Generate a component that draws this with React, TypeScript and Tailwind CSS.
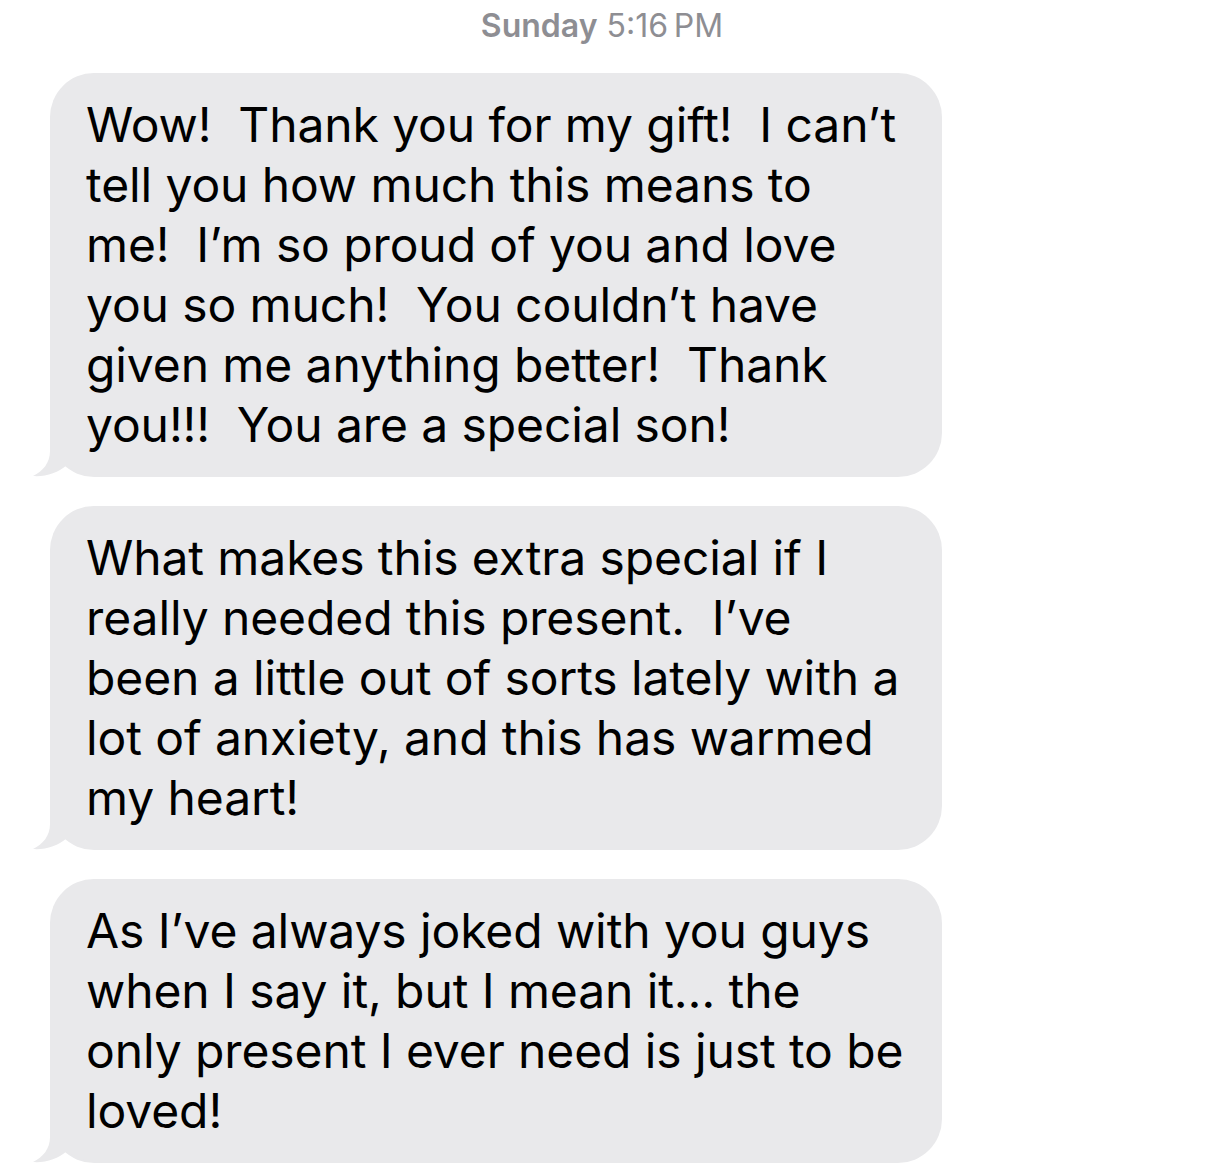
import React from "react";

const messages: string[][] = [
  [
    "Wow!  Thank you for my gift!  I can\u2019t",
    "tell you how much this means to",
    "me!  I\u2019m so proud of you and love",
    "you so much!  You couldn\u2019t have",
    "given me anything better!  Thank",
    "you!!!  You are a special son!",
  ],
  [
    "What makes this extra special if I",
    "really needed this present.  I\u2019ve",
    "been a little out of sorts lately with a",
    "lot of anxiety, and this has warmed",
    "my heart!",
  ],
  [
    "As I\u2019ve always joked with you guys",
    "when I say it, but I mean it\u2026 the",
    "only present I ever need is just to be",
    "loved!",
  ],
];

function Tail() {
  return (
    <svg
      className="absolute left-[-17px] bottom-0"
      width="80"
      height="46"
      viewBox="0 0 80 46"
    >
      <path
        d="M17 0 L17 20 C17 32 10 40 0 45 C12 46 25 42 34 34 C43 41 56 46 72 46 L80 46 L80 0 Z"
        fill="#e9e9eb"
      />
    </svg>
  );
}

export default function App() {
  return (
    <div
      className="w-[1206px] h-[1173px] bg-white overflow-hidden"
      style={{ fontFamily: "Inter, 'Noto Sans', sans-serif" }}
    >
      <div className="h-[73px] flex justify-center pl-[0px] pt-[6px]">
        <div className="text-[32px] leading-[40px] text-[#8e8e93] -translate-x-[1px]">
          <span className="font-semibold">Sunday</span>{" "}
          <span>5:16&#8201;PM</span>
        </div>
      </div>
      <div className="flex flex-col gap-[29px] pl-[50px]">
        {messages.map((lines, i) => (
          <div
            key={i}
            className="relative w-[892px] bg-[#e9e9eb] rounded-[44px] pl-[36px] py-[22px]"
          >
            <Tail />
            <div className="relative text-[48px] leading-[60px] text-black tracking-[-0.1px]">
              {lines.map((l, j) => (
                <div key={j} className="whitespace-pre">
                  {l}
                </div>
              ))}
            </div>
          </div>
        ))}
      </div>
    </div>
  );
}
